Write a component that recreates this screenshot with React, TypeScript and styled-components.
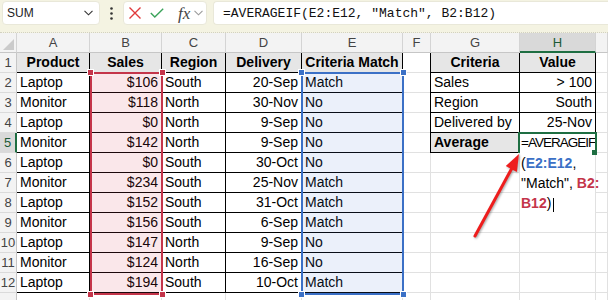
import React from 'react';
import styled, { createGlobalStyle } from 'styled-components';

const GlobalStyle = createGlobalStyle`
  html, body { margin: 0; padding: 0; background: #fff; }
  body {
    width: 608px;
    height: 300px;
    overflow: hidden;
    font-family: 'Liberation Sans', Arial, sans-serif;
  }
  *, *::before, *::after { box-sizing: border-box; }
`;

// sheet column widths: row header, A..I
const COLS = '17px 73px 72px 64px 76px 101px 28px 89px 76px 1fr';
const GRID = '#e1e1e1';
const RED = '#c4354a';
const BLUE = '#3b70c6';
const GREEN = '#1e6e42';

// formula bar
const FormulaBar = styled.div`
  height: 33px;
  background: #f4f3e2;
  border-bottom: 1px dotted #d2d1c0;
  display: flex;
  align-items: flex-start;
  padding: 1px 0 0 2px;
`;

const NameBox = styled.div`
  width: 98px;
  height: 24px;
  background: #fff;
  border: 1px solid #e9e8d9;
  border-radius: 4px;
  display: flex;
  align-items: center;
  justify-content: space-between;
  padding: 0 6px 0 4px;
  font-size: 12px;
  color: #222;
`;

const Grip = styled.div`
  width: 23px;
  height: 24px;
  display: flex;
  align-items: center;
  justify-content: center;
`;

const ButtonBox = styled.div`
  width: 84px;
  height: 24px;
  background: #fff;
  border: 1px solid #e9e8d9;
  border-radius: 4px;
  display: flex;
  align-items: center;
  padding-left: 4px;
`;

const IconSlot = styled.span<{ $ml?: number }>`
  display: flex;
  align-items: center;
  margin-left: ${p => p.$ml ?? 0}px;
`;

const Fx = styled.span`
  font-family: 'Liberation Serif', 'Times New Roman', serif;
  font-style: italic;
  font-size: 17px;
  color: #444;
  line-height: 1;
`;

const FormulaInput = styled.div`
  flex: 1;
  margin-left: 6px;
  height: 24px;
  background: #fff;
  border: 1px solid #e9e8d9;
  border-right: none;
  border-radius: 4px 0 0 4px;
  padding-left: 9px;
  font-family: 'Liberation Mono', 'Courier New', monospace;
  font-size: 13px;
  line-height: 23px;
  color: #111;
  white-space: pre;
`;

// sheet
const Sheet = styled.div`
  position: relative;
  height: 267px;
  overflow: hidden;
`;

const Grid = styled.div`
  display: grid;
  grid-template-columns: ${COLS};
  grid-auto-rows: 20px;
`;

const Overlay = styled(Grid)`
  position: absolute;
  inset: 0;
  pointer-events: none;
`;

const Corner = styled.div`
  position: relative;
  background: #f3f3f3;
  border-right: 1px solid #d4d4d4;
  border-bottom: 1px solid #c6c6c6;
  &::after {
    content: '';
    position: absolute;
    right: 2px;
    bottom: 2px;
    border-style: solid;
    border-width: 0 0 11px 11px;
    border-color: transparent transparent #cbcbcb transparent;
  }
`;

const ColHead = styled.div<{ $active?: boolean }>`
  background: ${p => (p.$active ? '#d9d9d9' : '#f3f3f3')};
  border-right: 1px solid #d4d4d4;
  border-bottom: ${p => (p.$active ? `2px solid ${GREEN}` : '1px solid #c6c6c6')};
  display: flex;
  align-items: center;
  justify-content: center;
  font-size: 13px;
  color: ${p => (p.$active ? '#1b5a36' : '#444')};
`;

const RowHead = styled.div<{ $active?: boolean }>`
  background: ${p => (p.$active ? '#d9d9d9' : '#f3f3f3')};
  border-right: ${p => (p.$active ? `2px solid ${GREEN}` : '1px solid #c6c6c6')};
  border-bottom: 1px solid #dadada;
  display: flex;
  align-items: center;
  justify-content: center;
  font-size: 13px;
  color: ${p => (p.$active ? '#1b5a36' : '#444')};
`;

type Align = 'left' | 'right' | 'center';

const Cell = styled.div<{ $align?: Align; $bold?: boolean; $head?: boolean; $ruled?: boolean; $leftRule?: boolean }>`
  border-right: 1px solid ${p => (p.$ruled ? '#000' : GRID)};
  border-bottom: 1px solid ${p => (p.$ruled ? '#000' : GRID)};
  box-shadow: ${p => (p.$leftRule ? '-1px 0 0 #000' : 'none')};
  background: ${p => (p.$head ? '#e6e6e6' : '#fff')};
  font-size: 14px;
  font-weight: ${p => (p.$bold ? 700 : 400)};
  text-align: ${p => p.$align ?? 'left'};
  line-height: 19px;
  padding: 0 3px;
  white-space: nowrap;
  overflow: hidden;
  color: #000;
`;

const RangeFrame = styled.div<{ $col: number; $color: string; $tint: string; $ml: number }>`
  position: relative;
  grid-column: ${p => p.$col};
  grid-row: 3 / 14;
  margin: -1px -1px -2px ${p => p.$ml}px;
  border: 2px solid ${p => p.$color};
  background: ${p => p.$tint};
`;

const Handle = styled.span<{ $color: string; $v: 'top' | 'bottom'; $h: 'left' | 'right' }>`
  position: absolute;
  ${p => p.$v}: -5px;
  ${p => p.$h}: -5px;
  width: 7px;
  height: 7px;
  background: ${p => p.$color};
  border: 1px solid #fff;
`;

const EditBox = styled.div`
  grid-column: 9;
  grid-row: 6 / 10;
  margin-right: 1px;
  background: #fff;
  padding-left: 1px;
  font-size: 14px;
  color: #000;
`;

const EditLine = styled.div<{ $narrow?: boolean }>`
  height: 20px;
  line-height: 20px;
  white-space: nowrap;
  font-size: ${p => (p.$narrow ? '13.5px' : '14px')};
  letter-spacing: ${p => (p.$narrow ? '-1px' : '0')};
`;

const Ref = styled.span<{ $color: string }>`
  font-weight: 700;
  color: ${p => p.$color};
`;

const Caret = styled.span`
  display: inline-block;
  width: 1px;
  height: 14px;
  margin-left: 2px;
  vertical-align: -4px;
  background: #000;
`;

const ActiveFrame = styled.div`
  position: relative;
  grid-column: 9;
  grid-row: 6;
  margin: -1px -1px 0 -2px;
  border: 2px solid ${GREEN};
  border-bottom: none;
`;

const FillHandle = styled.span`
  position: absolute;
  right: -2px;
  bottom: -2px;
  width: 5px;
  height: 5px;
  background: ${GREEN};
`;

const Arrow = styled.svg`
  position: absolute;
  left: 0;
  top: 0;
  overflow: visible;
  filter: drop-shadow(1px 1px 1px rgba(0, 0, 0, 0.35));
`;

const letters = ['A', 'B', 'C', 'D', 'E', 'F', 'G', 'H', ''];
const heads = ['Product', 'Sales', 'Region', 'Delivery', 'Criteria Match'];
const data: string[][] = [
  ['Laptop', '$106', 'South', '20-Sep', 'Match'],
  ['Monitor', '$118', 'North', '30-Nov', 'No'],
  ['Laptop', '$0', 'North', '9-Sep', 'No'],
  ['Monitor', '$142', 'North', '9-Sep', 'No'],
  ['Laptop', '$0', 'South', '30-Oct', 'No'],
  ['Monitor', '$234', 'South', '25-Nov', 'Match'],
  ['Laptop', '$152', 'South', '31-Oct', 'Match'],
  ['Monitor', '$156', 'South', '6-Sep', 'Match'],
  ['Laptop', '$147', 'North', '9-Sep', 'No'],
  ['Monitor', '$124', 'North', '16-Sep', 'No'],
  ['Laptop', '$194', 'South', '10-Oct', 'Match'],
];
const aligns: Align[] = ['left', 'right', 'left', 'right', 'left'];
const criteria = [
  ['Sales', '> 100'],
  ['Region', 'South'],
  ['Delivered by', '25-Nov'],
];

function sheetRow(r: number) {
  // row 13 only peeks in under the window edge, its number is out of view
  const cells: React.ReactNode[] = [
    <RowHead key="rh" $active={r === 5}>{r <= 12 ? r : ''}</RowHead>,
  ];

  // A..E
  if (r === 1) {
    heads.forEach(h =>
      cells.push(<Cell key={h} $head $bold $ruled $align="center">{h}</Cell>)
    );
  } else if (r <= 12) {
    data[r - 2].forEach((v, i) =>
      cells.push(<Cell key={i} $ruled $align={aligns[i]}>{v}</Cell>)
    );
  } else {
    for (let i = 0; i < 5; i++) cells.push(<Cell key={i} />);
  }

  // F
  cells.push(<Cell key="f" />);

  // G, H
  if (r === 1) {
    cells.push(<Cell key="g" $head $bold $ruled $leftRule $align="center">Criteria</Cell>);
    cells.push(<Cell key="h" $head $bold $ruled $align="center">Value</Cell>);
  } else if (r <= 4) {
    const [k, v] = criteria[r - 2];
    cells.push(<Cell key="g" $ruled $leftRule>{k}</Cell>);
    cells.push(<Cell key="h" $ruled $align="right">{v}</Cell>);
  } else if (r === 5) {
    cells.push(<Cell key="g" $head $bold $ruled $leftRule>Average</Cell>);
    cells.push(<Cell key="h" $ruled />);
  } else {
    cells.push(<Cell key="g" />);
    cells.push(<Cell key="h" />);
  }

  // I
  cells.push(<Cell key="i" />);
  return cells;
}

const corners: ['top' | 'bottom', 'left' | 'right'][] = [
  ['top', 'left'],
  ['top', 'right'],
  ['bottom', 'left'],
  ['bottom', 'right'],
];

export default function App() {
  const rows = Array.from({ length: 13 }, (_, i) => i + 1);
  return (
    <>
      <GlobalStyle />
      <FormulaBar>
        <NameBox>
          <span>SUM</span>
          <svg width="9" height="6" viewBox="0 0 9 6">
            <polyline points="0.5,0.8 4.5,4.8 8.5,0.8" fill="none" stroke="#333" strokeWidth="1.1" />
          </svg>
        </NameBox>
        <Grip>
          <svg width="3" height="13" viewBox="0 0 3 13">
            <circle cx="1.5" cy="1.5" r="1.3" fill="#333" />
            <circle cx="1.5" cy="6.5" r="1.3" fill="#333" />
            <circle cx="1.5" cy="11.5" r="1.3" fill="#333" />
          </svg>
        </Grip>
        <ButtonBox>
          <IconSlot>
            <svg width="14" height="14" viewBox="0 0 14 14">
              <path d="M1.5 1.5 L12.5 12.5 M12.5 1.5 L1.5 12.5" stroke="#e0393b" strokeWidth="1.4" fill="none" />
            </svg>
          </IconSlot>
          <IconSlot $ml={8}>
            <svg width="14" height="10" viewBox="0 0 14 10">
              <polyline points="0.8,5 4.8,9 13.2,0.8" fill="none" stroke="#3aa35a" strokeWidth="1.4" />
            </svg>
          </IconSlot>
          <IconSlot $ml={14}>
            <Fx>fx</Fx>
          </IconSlot>
          <IconSlot $ml={4}>
            <svg width="9" height="6" viewBox="0 0 9 6">
              <polyline points="0.5,0.8 4.5,4.8 8.5,0.8" fill="none" stroke="#9a9a9a" strokeWidth="1.1" />
            </svg>
          </IconSlot>
        </ButtonBox>
        <FormulaInput>=AVERAGEIF(E2:E12, "Match", B2:B12)</FormulaInput>
      </FormulaBar>

      <Sheet>
        <Grid>
          <Corner />
          {letters.map((l, i) => (
            <ColHead key={i} $active={l === 'H'}>{l}</ColHead>
          ))}
          {rows.map(r => sheetRow(r))}
        </Grid>

        <Overlay>
          <RangeFrame $col={3} $color={RED} $tint="rgba(214, 60, 80, 0.12)" $ml={0}>
            {corners.map(([v, h]) => (
              <Handle key={v + h} $color={RED} $v={v} $h={h} />
            ))}
          </RangeFrame>
          <RangeFrame $col={6} $color={BLUE} $tint="rgba(70, 120, 205, 0.11)" $ml={-1}>
            {corners.map(([v, h]) => (
              <Handle key={v + h} $color={BLUE} $v={v} $h={h} />
            ))}
          </RangeFrame>
          <EditBox>
            <EditLine $narrow>=AVERAGEIF</EditLine>
            <EditLine>
              (<Ref $color={BLUE}>E2:E12</Ref>,
            </EditLine>
            <EditLine>
              "Match", <Ref $color={RED}>B2:</Ref>
            </EditLine>
            <EditLine>
              <Ref $color={RED}>B12</Ref>)<Caret />
            </EditLine>
          </EditBox>
          <ActiveFrame>
            <FillHandle />
          </ActiveFrame>
        </Overlay>

        <Arrow width="608" height="267" viewBox="0 0 608 267">
          <line x1="475" y1="203" x2="512" y2="135" stroke="#ee1d1d" strokeWidth="3" strokeLinecap="round" />
          <polygon points="519,121 516.8,139 505.8,133" fill="#ee1d1d" />
        </Arrow>
      </Sheet>
    </>
  );
}
